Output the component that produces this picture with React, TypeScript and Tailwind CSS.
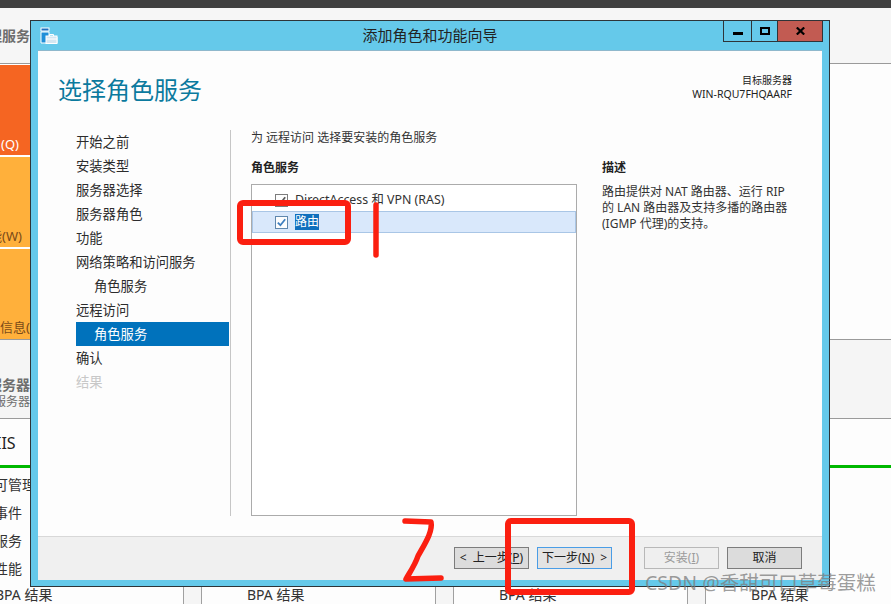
const font = { fontFamily: '"Noto Sans", "Noto Sans CJK SC", sans-serif' };

const navItems = [
  { label: "开始之前" },
  { label: "安装类型" },
  { label: "服务器选择" },
  { label: "服务器角色" },
  { label: "功能" },
  { label: "网络策略和访问服务" },
  { label: "角色服务", sub: true },
  { label: "远程访问" },
  { label: "角色服务", sub: true, active: true },
  { label: "确认" },
  { label: "结果", disabled: true },
];

function CheckBox({ tone }: { tone: "gray" | "blue" }) {
  const blue = tone === "blue";
  return (
    <svg width="13" height="13" viewBox="0 0 13 13" className="shrink-0">
      <rect x="0.5" y="0.5" width="12" height="12" fill="#fdfdfd" stroke={blue ? "#5f87ad" : "#7c7c7c"} />
      <path d="M2.8 6.6 L5.4 9.2 L10.2 3.2" fill="none" stroke={blue ? "#3f7fbf" : "#5a5a5a"} strokeWidth="1.8" />
    </svg>
  );
}

function WizardButton({ children, variant }: { children: React.ReactNode; variant?: "focus" | "disabled" }) {
  const look =
    variant === "focus"
      ? "border-[#4a9de6] bg-[#e3e3e3] text-[#222]"
      : variant === "disabled"
        ? "border-[#b8b8b8] bg-[#efefef] text-[#9c9c9c]"
        : "border-[#7c7c7c] bg-[#dcdcdc] text-[#222]";
  return (
    <div className={`w-[75px] h-[22px] border flex items-center justify-center text-[12px] whitespace-nowrap ${look}`}>
      {children}
    </div>
  );
}

function Dialog() {
  return (
    <div className="absolute left-[30px] top-[20px] w-[800px] h-[567px] border border-[#2e3438] bg-[#65c9ea] flex flex-col">
      {/* title bar */}
      <div className="relative h-[29px] shrink-0 flex items-center justify-center text-[15px] text-[#222]">
        <svg width="18" height="18" viewBox="0 0 18 18" className="absolute left-[9px] top-[6px]">
          <rect x="1" y="1" width="8" height="3" fill="#1f6fc0" stroke="#fff" />
          <path d="M1 5 V16 H17 V10 H9 V5 Z" fill="#1f8fd8" stroke="#fff" />
          <rect x="6" y="9" width="11" height="7.5" fill="#d4e6f1" stroke="#fff" />
          <path d="M9.5 9 V7.5 H13.5 V9 M6 12 H17" fill="none" stroke="#fff" />
        </svg>
        添加角色和功能向导
        <div className="absolute right-[6px] top-0 h-[21px] flex border-b border-l border-[#2e3438]">
          <div className="w-[28px] flex items-center justify-center border-r border-[#2e3438]">
            <svg width="10" height="4" viewBox="0 0 10 4" className="mt-[5px]"><rect width="10" height="3" fill="#000" /></svg>
          </div>
          <div className="w-[26px] flex items-center justify-center border-r border-[#2e3438]">
            <svg width="10" height="8" viewBox="0 0 10 8"><rect x="1" y="1" width="8" height="6" fill="none" stroke="#000" strokeWidth="2" /></svg>
          </div>
          <div className="w-[45px] flex items-center justify-center bg-[#c25b52] border-r border-[#2e3438]">
            <svg width="9" height="8" viewBox="0 0 9 8"><path d="M0.8 0.5 L8.2 7.5 M8.2 0.5 L0.8 7.5" stroke="#000" strokeWidth="2.2" /></svg>
          </div>
        </div>
      </div>

      {/* client area */}
      <div className="mx-[7px] h-[529px] bg-[#fdfdfd] flex flex-col border-t border-[#8fb8cc]">
        <div className="h-[79px] shrink-0 flex justify-between pl-[20px] pr-[30px] pt-[21px]">
          <div className="text-[#0b7a9e] text-[24px] leading-[36px]">选择角色服务</div>
          <div className="text-right text-[#222] pt-[2px]">
            <div className="text-[10px] leading-[13px]">目标服务器</div>
            <div className="text-[10.5px] leading-[14px]">WIN-RQU7FHQAARF</div>
          </div>
        </div>

        <div className="h-[386px] shrink-0 flex">
          <div className="w-[191px] pl-[38px] shrink-0">
            {navItems.map((item, i) => (
              <div
                key={i}
                className={`h-[24px] pt-[2px] flex items-center text-[13.3px] ${item.sub ? "pl-[18px]" : ""} ${
                  item.active ? "bg-[#0072bc] text-white" : item.disabled ? "text-[#c8c8c8]" : "text-[#2c2c2c]"
                }`}
              >
                {item.label}
              </div>
            ))}
          </div>
          <div className="w-px ml-px bg-[#c6c6c6] shrink-0" />
          <div className="pl-[20px] pt-px flex-1 text-[12px] text-[#333]">
            <div className="h-[14px] leading-[14px]">为 远程访问 选择要安装的角色服务</div>
            <div className="flex gap-[25px] mt-[15px]">
              <div>
                <div className="font-bold text-[#222] leading-[16px] h-[24px]">角色服务</div>
                <div className="w-[326px] h-[332px] border border-[#ababab] bg-white">
                  <div className="h-[26px] flex items-center gap-[7px] pl-[23px] pt-[5px] text-[12.4px]">
                    <CheckBox tone="gray" />
                    <span>DirectAccess 和 VPN (RAS)</span>
                  </div>
                  <div className="h-[22px] bg-[#d9e8fb] border border-[#a9c6e6] flex items-center gap-[7px] pl-[22px]">
                    <CheckBox tone="blue" />
                    <span className="bg-[#0f6fbd] text-white h-[16px] leading-[16px]">路由</span>
                  </div>
                </div>
              </div>
              <div className="w-[200px]">
                <div className="font-bold text-[#222] leading-[16px] h-[24px]">描述</div>
                <div className="leading-[16px] whitespace-nowrap">
                  路由提供对 NAT 路由器、运行 RIP
                  <br />
                  的 LAN 路由器及支持多播的路由器
                  <br />
                  (IGMP 代理)的支持。
                </div>
              </div>
            </div>
          </div>
        </div>

        <div className="h-[44px] shrink-0 mt-[20px] bg-[#f0f0f0] border-t border-[#d8d8d8] flex items-start justify-end pr-[20px] pt-[10px]">
          <div className="flex gap-[8px]">
            <WizardButton>&lt;<span className="ml-[6px]">上一步(<u>P</u>)</span></WizardButton>
            <WizardButton variant="focus">下一步(<u>N</u>)<span className="ml-[6px]">&gt;</span></WizardButton>
          </div>
          <div className="flex gap-[8px] ml-[32px]">
            <WizardButton variant="disabled">安装(<u>I</u>)</WizardButton>
            <WizardButton>取消</WizardButton>
          </div>
        </div>
      </div>
    </div>
  );
}

function BackWindow() {
  return (
    <div className="w-[891px] h-[604px] flex flex-col bg-[#fdfdfd] overflow-hidden text-[#333]">
      <div className="h-2 shrink-0 bg-[#404040]" />
      <div className="h-[56px] shrink-0 bg-[#f6f6f6] border-b border-[#9a9a9a] flex items-center justify-start">
        <div className="w-[30px] flex justify-end whitespace-nowrap text-[14px] font-bold text-[#6e6e6e] pb-px">
          <span>管理服务</span>
        </div>
      </div>

      <div className="h-[275px] shrink-0 flex flex-col w-[30px] bg-white text-[13px] pt-px">
        <div className="h-[90px] bg-[#f56522] text-white flex items-end justify-end whitespace-nowrap pr-[11px] pb-px">
          <span>用(Q)</span>
        </div>
        <div className="h-[90px] mt-[2px] bg-[#ffb03b] text-[#7a4a18] flex items-end justify-end whitespace-nowrap pr-[8px] pb-px">
          <span>能(W)</span>
        </div>
        <div className="h-[90px] mt-[2px] bg-[#ffb03b] text-[#7a4a18] flex items-end justify-end whitespace-nowrap pb-[2px]">
          <span>和信息(</span>
        </div>
      </div>

      <div className="h-[80px] shrink-0 bg-[#f5f5f5] border-y border-[#9a9a9a] pt-[35px] text-[#6e6e6e]">
        <div className="w-[30px] flex justify-end whitespace-nowrap text-[14px] font-bold leading-[19px]"><span>服务器</span></div>
        <div className="w-[30px] flex justify-end whitespace-nowrap text-[12px] leading-[15px]"><span>服务器</span></div>
      </div>

      <div className="h-[46px] shrink-0 flex items-center text-[16px] text-[#222] -ml-[4px] pt-[2px]">IIS</div>
      <div className="h-[3px] shrink-0 bg-[#00b800]" />

      <div className="h-[118px] shrink-0 pt-[2px] text-[14px] text-[#333] -ml-[6px]">
        <div className="h-[28px] flex items-center">可管理</div>
        <div className="h-[28px] flex items-center">事件</div>
        <div className="h-[28px] flex items-center">服务</div>
        <div className="h-[28px] flex items-center">性能</div>
      </div>

      <div className="flex-1 flex -ml-[5px] text-[14px] text-[#333]">
        {[0, 1, 2, 3].map((i) => (
          <div key={i} className="w-[252px] shrink-0 flex">
            <div className="w-[188px] leading-[18px]">BPA 结果</div>
            <div className="w-[19px] bg-[#f5f5f5] border-x border-[#a0a0a0]" />
          </div>
        ))}
      </div>
    </div>
  );
}

export default function App() {
  return (
    <div className="relative w-[891px] h-[604px] overflow-hidden" style={font}>
      <BackWindow />
      <Dialog />

      {/* red pen marks on top of the screenshot */}
      <svg className="absolute left-0 top-0 pointer-events-none" width="891" height="604" viewBox="0 0 891 604" fill="none">
        <rect x="240" y="203" width="108" height="39" rx="3" stroke="#fb1f10" strokeWidth="6" />
        <path d="M376 205 V255" stroke="#fb1f10" strokeWidth="5.5" strokeLinecap="round" />
        <rect x="508" y="521" width="124" height="71" rx="3" stroke="#fb1f10" strokeWidth="6" />
        <path d="M405 521 L431 522 C433 532 424 545 418 556 C415 565 410 572 406 579 L441 578" stroke="#fb1f10" strokeWidth="5.5" strokeLinecap="round" strokeLinejoin="round" />
      </svg>

      <div className="absolute left-[645px] top-[569px] text-[19.5px] leading-[28px] whitespace-nowrap text-[#7d7d7d]/75">
        CSDN @香甜可口草莓蛋糕
      </div>
    </div>
  );
}
